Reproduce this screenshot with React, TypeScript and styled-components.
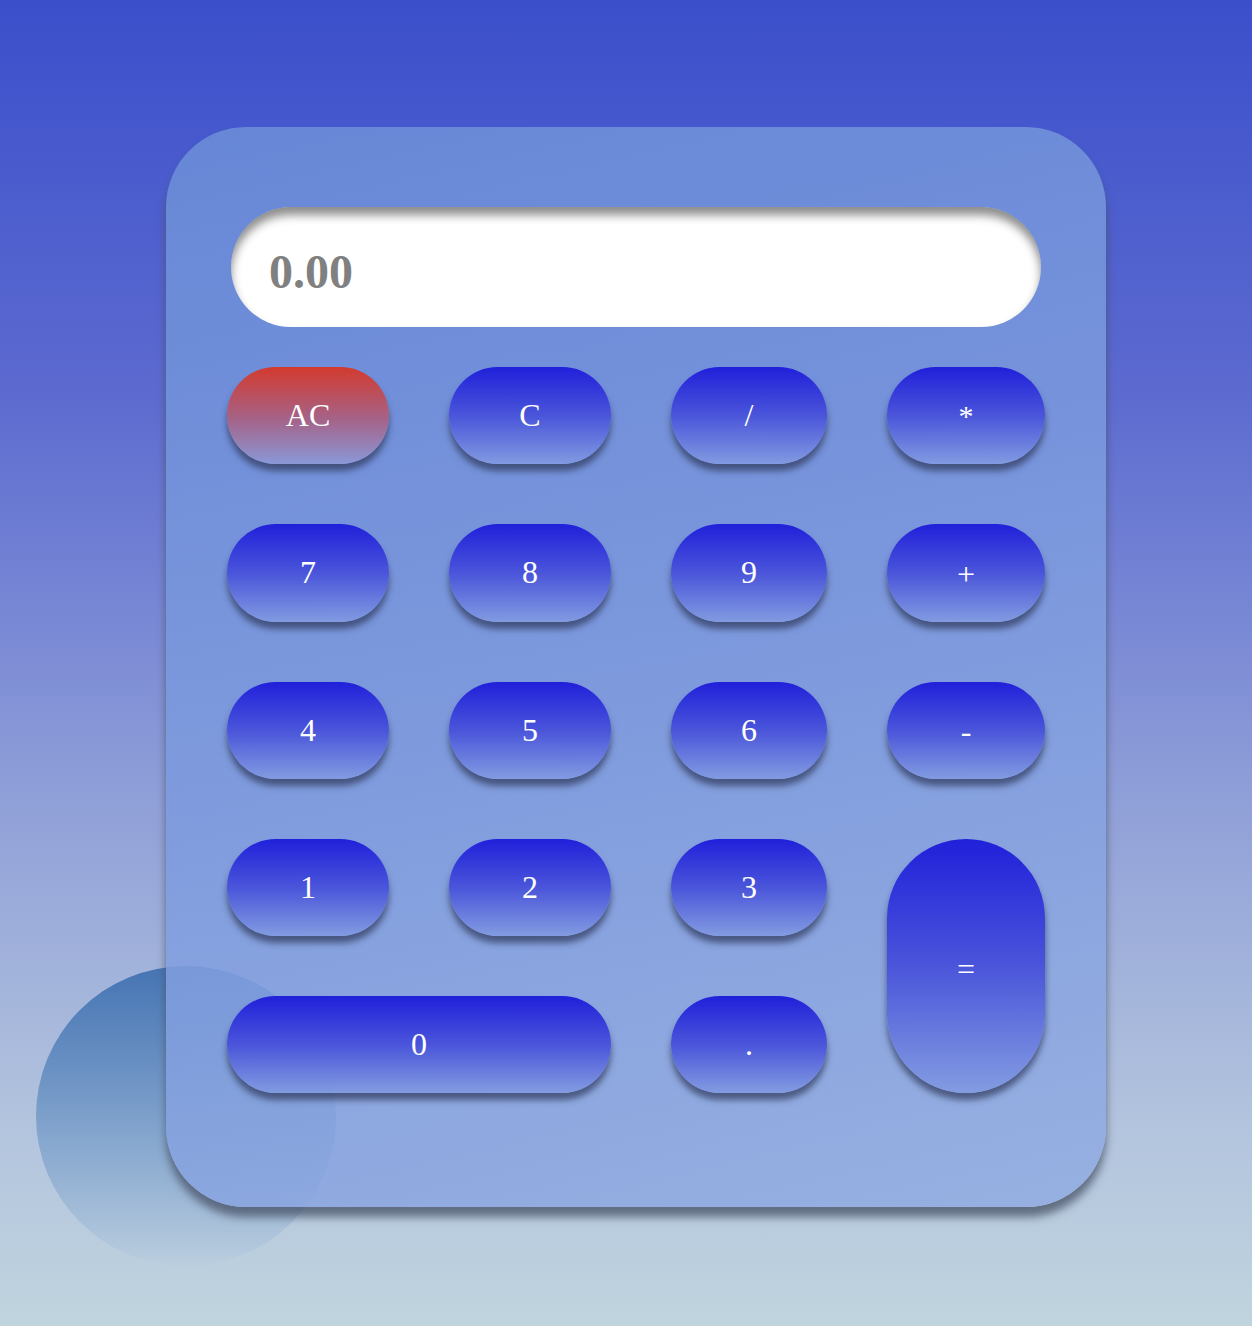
import React from "react";
import styled, { createGlobalStyle } from "styled-components";

const GlobalStyle = createGlobalStyle`
  html, body { margin: 0; padding: 0; }
  body {
    font-family: "Liberation Serif", "Times New Roman", serif;
    background: linear-gradient(180deg, #3b4fcb 0%, #5d6bd0 30%, #8f9fd8 60%, #b3c4de 85%, #c0d4de 100%);
    min-height: 1326px;
  }
`;

const Page = styled.main`
  position: relative;
  width: 1252px;
  height: 1326px;
  box-sizing: border-box;
  padding-top: 127px;
  display: flex;
  justify-content: center;
  overflow: hidden;
`;

const Orb = styled.div`
  position: absolute;
  left: 36px;
  top: 966px;
  width: 300px;
  height: 300px;
  border-radius: 50%;
  background: linear-gradient(180deg, rgba(60, 110, 175, 0.9) 0%, rgba(100, 145, 195, 0.55) 60%, rgba(170, 195, 225, 0.1) 100%);
  z-index: 0;
`;

const Calculator = styled.section`
  position: relative;
  z-index: 1;
  width: 940px;
  height: 1080px;
  box-sizing: border-box;
  margin-left: 20px;
  padding: 80px 61px 0 61px;
  border-radius: 80px;
  background: linear-gradient(160deg, rgba(108, 143, 216, 0.86) 0%, rgba(125, 155, 222, 0.86) 50%, rgba(146, 172, 226, 0.86) 100%);
  box-shadow: 0 10px 8px rgba(70, 80, 100, 0.75);
  display: flex;
  flex-direction: column;
  gap: 40px;
`;

const Display = styled.div`
  margin: 0 4px;
  height: 120px;
  border-radius: 60px;
  background: #ffffff;
  box-shadow: inset 0 8px 10px rgba(0, 0, 0, 0.45);
  display: flex;
  align-items: center;
  padding-left: 38px;
  padding-top: 8px;
  box-sizing: border-box;
  font-family: "Liberation Serif", "Times New Roman", serif;
  font-weight: bold;
  font-size: 48px;
  color: #808080;
`;

const Keys = styled.div`
  display: grid;
  grid-template-columns: 162px 162px 156px 158px;
  grid-auto-rows: 97.3px;
  column-gap: 60px;
  row-gap: 60px;
`;

const Key = styled.button<{ $danger?: boolean; $wide?: boolean; $tall?: boolean; $size?: number; $shift?: number }>`
  border: none;
  outline: none;
  margin: 0;
  padding: ${(p) => (p.$shift ? `${p.$shift}px 0 0 0` : "0")};
  cursor: pointer;
  color: #ffffff;
  font-family: "Liberation Serif", "Times New Roman", serif;
  font-size: ${(p) => p.$size ?? 32}px;
  display: flex;
  align-items: center;
  justify-content: center;
  grid-column: ${(p) => (p.$wide ? "span 2" : "auto")};
  grid-row: ${(p) => (p.$tall ? "span 2" : "auto")};
  border-radius: ${(p) => (p.$tall ? "80px" : "50px")};
  background: ${(p) =>
    p.$danger
      ? "linear-gradient(180deg, #d33a2e 0%, #a4648a 55%, #8a98d8 100%)"
      : "linear-gradient(180deg, #2020da 0%, #4a55da 50%, rgba(130, 155, 225, 0.95) 100%)"};
  box-shadow: 0 7px 6px rgba(45, 55, 90, 0.7);
`;

const keys: { label: string; danger?: boolean; wide?: boolean; tall?: boolean; size?: number; shift?: number }[] = [
  { label: "AC", danger: true },
  { label: "C" },
  { label: "/" },
  { label: "*", size: 30 },
  { label: "7" },
  { label: "8" },
  { label: "9" },
  { label: "+", size: 32, shift: 4 },
  { label: "4" },
  { label: "5" },
  { label: "6" },
  { label: "-", size: 32, shift: 2 },
  { label: "1" },
  { label: "2" },
  { label: "3" },
  { label: "=", tall: true, size: 32, shift: 6 },
  { label: "0", wide: true },
  { label: "." },
];

export default function App() {
  return (
    <>
      <GlobalStyle />
      <Page>
        <Orb />
        <Calculator>
          <Display>0.00</Display>
          <Keys>
            {keys.map((k) => (
              <Key
                key={k.label}
                $danger={k.danger}
                $wide={k.wide}
                $tall={k.tall}
                $size={k.size}
                $shift={k.shift}
              >
                {k.label}
              </Key>
            ))}
          </Keys>
        </Calculator>
      </Page>
    </>
  );
}
